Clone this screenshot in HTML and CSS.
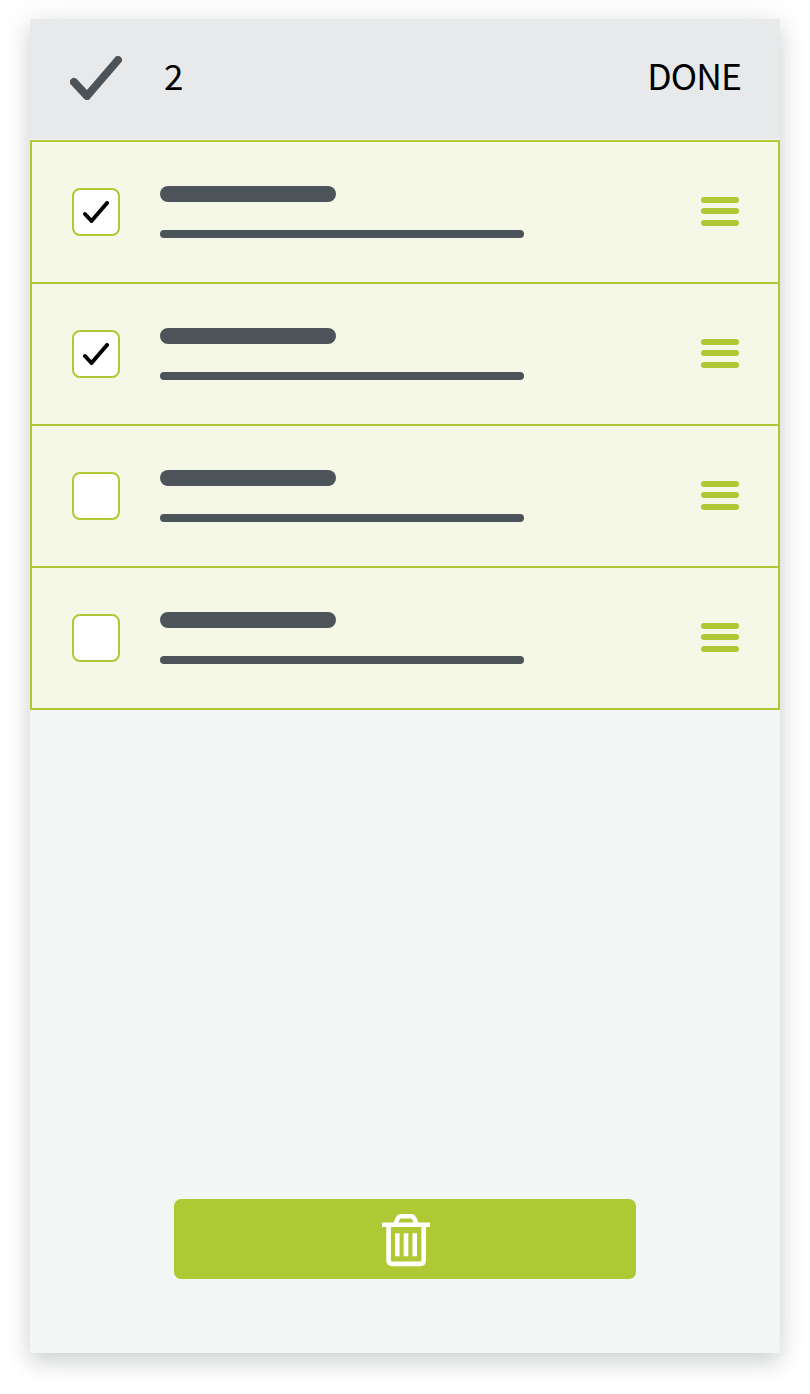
FILE: index.html
```html
<!DOCTYPE html>
<html lang="en">
<head>
<meta charset="utf-8">
<title>Edit list</title>
<link rel="stylesheet" href="styles.css">
</head>
<body>
<svg class="symbols" aria-hidden="true">
  <symbol id="check" viewBox="0 0 52 44"><path d="M4 26 17 40 48 4" fill="none" stroke="currentColor" stroke-width="8" stroke-linecap="round" stroke-linejoin="round"/></symbol>
</svg>
<main class="screen">
  <header class="header">
    <svg class="header-check"><use href="#check"/></svg>
    <span class="count">2</span>
    <span class="done">DONE</span>
  </header>
  <ul class="list">
    <li class="row">
      <span class="box"><svg class="tick"><use href="#check"/></svg></span>
      <div class="lines"><div class="title"></div><div class="detail"></div></div>
      <div class="handle"><i></i><i></i><i></i></div>
    </li>
    <li class="row">
      <span class="box"><svg class="tick"><use href="#check"/></svg></span>
      <div class="lines"><div class="title"></div><div class="detail"></div></div>
      <div class="handle"><i></i><i></i><i></i></div>
    </li>
    <li class="row">
      <span class="box"></span>
      <div class="lines"><div class="title"></div><div class="detail"></div></div>
      <div class="handle"><i></i><i></i><i></i></div>
    </li>
    <li class="row">
      <span class="box"></span>
      <div class="lines"><div class="title"></div><div class="detail"></div></div>
      <div class="handle"><i></i><i></i><i></i></div>
    </li>
  </ul>
  <button class="delete" aria-label="Delete">
    <svg class="trash" viewBox="0 0 48 53" fill="none" stroke="#fff">
      <path d="M0 10.700H48" stroke-width="4.6"/>
      <path d="M13.500 10 15.500 5Q16.700 2.200 19 2.200H29Q31.300 2.200 32.500 5L34.500 10" stroke-width="4.600"/>
      <path d="M6.600 12V46Q6.600 49.900 10.500 49.900H37.800Q41.700 49.900 41.700 46V12" stroke-width="4.600"/>
      <path d="M15.300 19.300V42.300M24 19.300V42.300M32.700 19.300V42.300" stroke-width="4.600"/>
    </svg>
  </button>
</main>
</body>
</html>
```

FILE: styles.css
```css
* { box-sizing: border-box; }
body {
  margin: 0;
  padding: 19px 30px 41px;
  background: #fff;
  font-family: "Noto Sans CJK SC", "Noto Sans", sans-serif;
}
.symbols { position: absolute; width: 0; height: 0; }
.screen {
  display: flex;
  flex-direction: column;
  height: 1334px;
  background: #f4f6f5;
  box-shadow: 0 10px 20px rgba(66, 74, 80, .2), 0 0 30px rgba(66, 74, 80, .09);
}
.header {
  display: flex;
  align-items: center;
  height: 120px;
  padding: 0 39px 2px 40px;
  background: #e7e9eb;
  color: #000;
  font-size: 35px;
  line-height: 52px;
}
.header-check { width: 52px; height: 44px; color: #4c5359; }
.count, .done { padding-bottom: 7px; }
.count { margin-left: 42px; }
.done { margin-left: auto; font-size: 35.500px; letter-spacing: -.900px; }
.list {
  margin: 1px 0 0;
  padding: 0;
  list-style: none;
  background: #f5f8e7;
  border: 2px solid #afc935;
}
.row {
  display: flex;
  align-items: center;
  height: 142px;
  padding: 0 39px 0 40px;
  border-bottom: 2px solid #afc935;
}
.row:last-child { height: 140px; border-bottom: 0; }
.box {
  display: flex;
  align-items: center;
  justify-content: center;
  width: 48px;
  height: 48px;
  border: 2px solid #afc935;
  border-radius: 8px;
  background: #fff;
}
.tick { width: 26px; height: 22px; color: #000; }
.lines { display: grid; gap: 28px; margin-left: 40px; }
.title { width: 176px; height: 16px; border-radius: 8px; background: #4c5359; }
.detail { width: 364px; height: 8px; border-radius: 4px; background: #4c5359; }
.handle {
  display: grid;
  grid-template-rows: 11px 12px 6px;
  width: 38px;
  margin-left: auto;
  margin-top: -1px;
}
.handle i { height: 6px; border-radius: 3px; background: #afc935; }
.delete {
  display: flex;
  align-items: center;
  justify-content: center;
  align-self: center;
  width: 462px;
  height: 80px;
  margin: auto 0 74px;
  padding: 2px 0 0 2px;
  border: 0;
  border-radius: 7px;
  background: #afc935;
}
.trash { width: 48px; height: 53px; }
```
